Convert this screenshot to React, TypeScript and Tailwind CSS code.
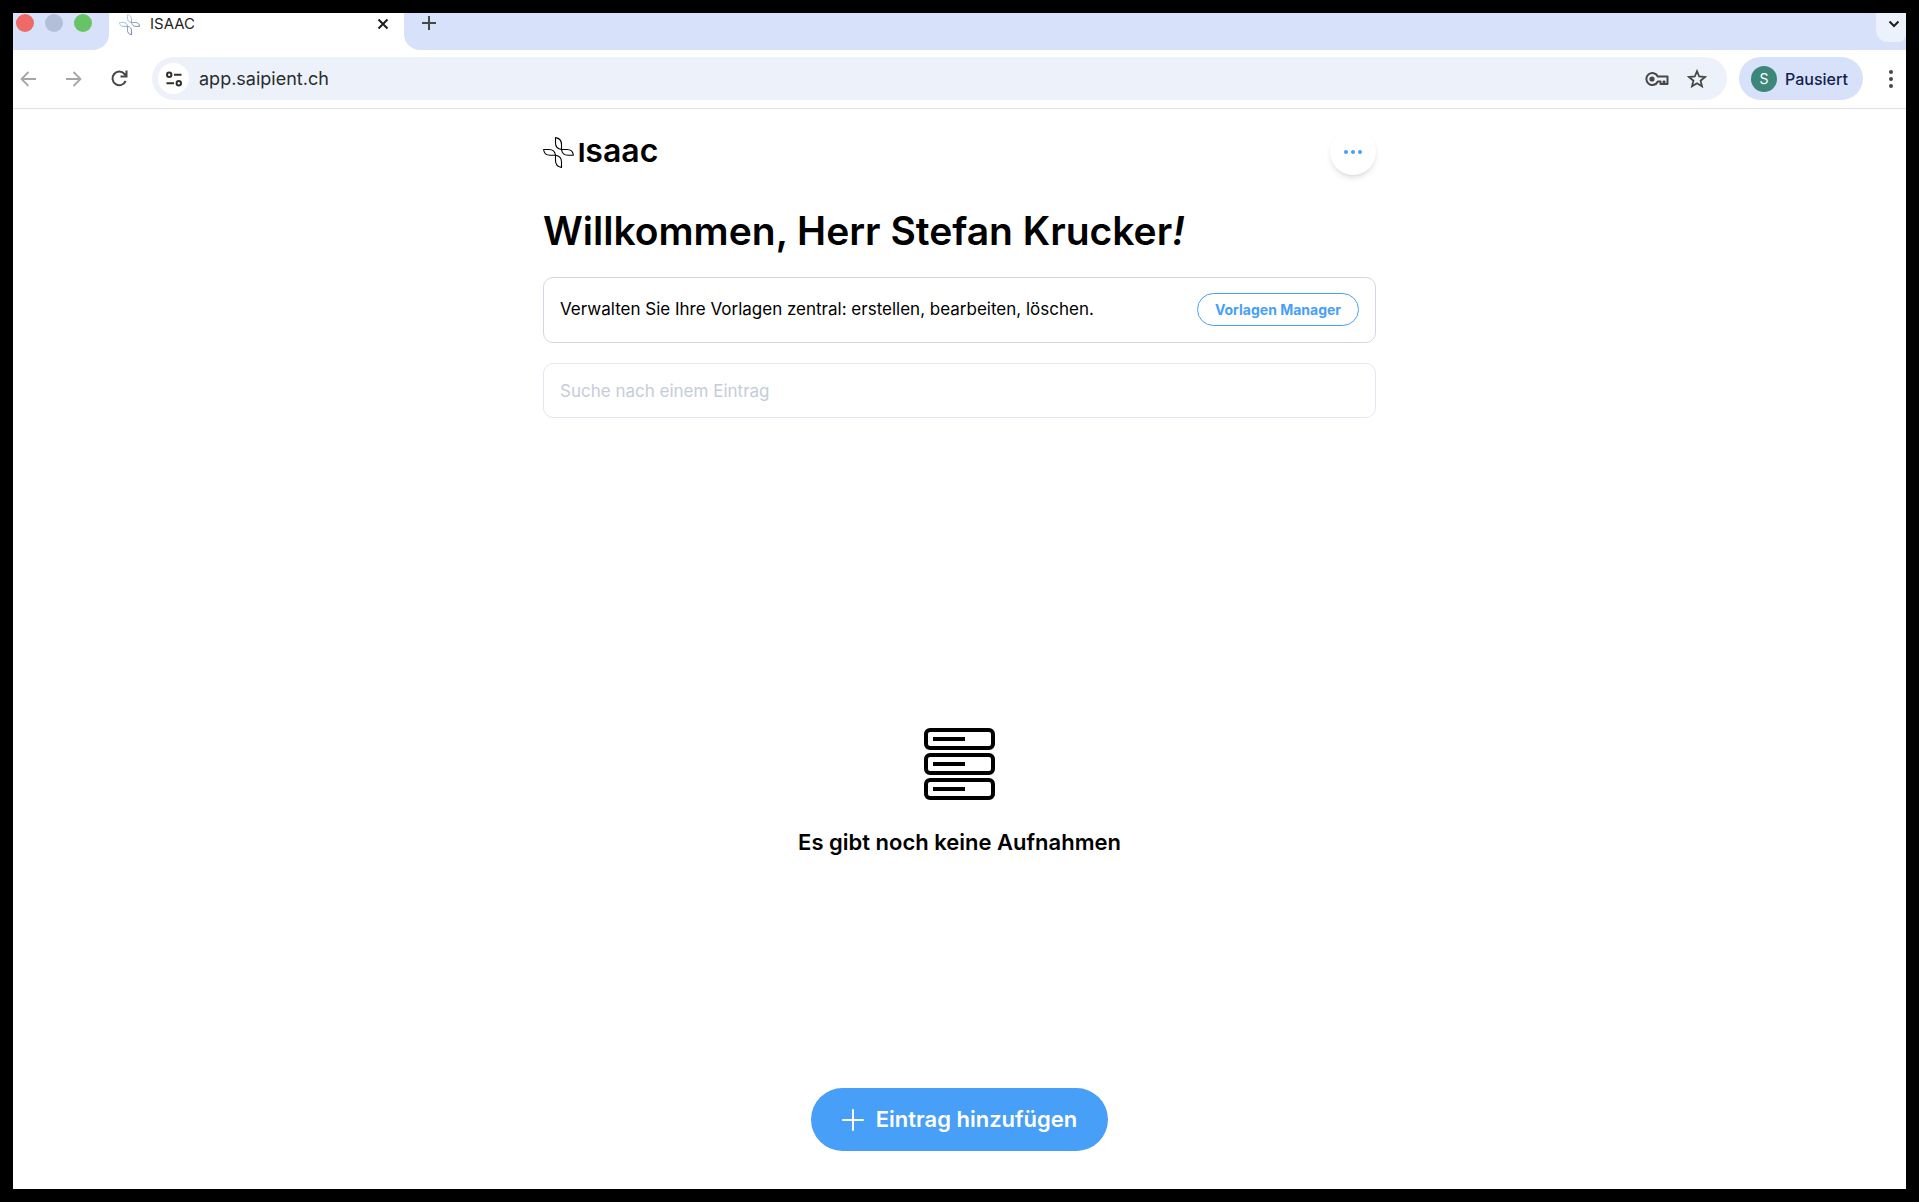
import React from 'react';

const Petals: React.FC<{ className: string; stroke: string }> = ({ className, stroke }) => (
  <svg viewBox="0 0 31 31" className={className} fill="none" stroke={stroke} strokeWidth="1.1" strokeLinejoin="round" aria-hidden="true">
    <defs>
      <linearGradient id="petal" gradientUnits="userSpaceOnUse" x1="4" y1="4" x2="24" y2="30">
        <stop offset="0" stopColor="#9fd8ee" />
        <stop offset="1" stopColor="#39427c" />
      </linearGradient>
    </defs>
    <path d="M12.500 0.600C16.500 1.200 18.500 4 18.500 7.500V12.500C14.500 12 12.500 9.500 12.500 6Z" />
    <path d="M18.500 12.500H24C28 12.500 30 14.500 30.400 18.200H25C21 18.200 19 16.200 18.500 12.500Z" />
    <path d="M0.600 12.500H6C10 12.500 12 14.500 12.500 18.200H7C3 18.200 1 16.200 0.600 12.500Z" />
    <path d="M12.500 18.200C16.500 18.700 18.500 21.200 18.500 25V30.400C14.500 29.800 12.500 27.500 12.500 23.500Z" />
  </svg>
);

const TabStrip: React.FC = () => (
  <div className="flex h-[37px] bg-white">
    <div className="flex w-24 items-start gap-[11px] rounded-br-2xl bg-[#d7e2fa] pt-[1px] pl-[3px]">
      <button aria-label="Schliessen" className="size-[18px] rounded-full bg-[#ed6a66]" />
      <button aria-label="Minimieren" className="size-[18px] rounded-full bg-[#b3bfd8]" />
      <button aria-label="Maximieren" className="size-[18px] rounded-full bg-[#66c466]" />
    </div>
    <div className="flex h-[22px] w-[295px] items-center pr-[11px] pl-[10px]">
      <Petals className="size-[21px]" stroke="url(#petal)" />
      <span className="ml-[10px] flex-1 text-[15px] text-[#1f1f1f]">ISAAC</span>
      <button aria-label="Tab schliessen" className="p-1">
        <svg viewBox="0 0 12 12" className="size-3" stroke="#1f1f1f" strokeWidth="2">
          <path d="M1.500 1.500L10.500 10.500M10.500 1.500L1.500 10.500" />
        </svg>
      </button>
    </div>
    <div className="flex flex-1 items-start justify-between rounded-bl-2xl bg-[#d7e2fa]">
      <button aria-label="Neuer Tab" className="py-[3px] pl-[18px]">
        <svg viewBox="0 0 14 14" className="size-[14px]" stroke="#474747" strokeWidth="2">
          <path d="M7 0V14M0 7H14" />
        </svg>
      </button>
      <button aria-label="Tabs suchen" className="flex h-[29px] w-[30px] justify-center rounded-bl-xl rounded-br-lg bg-[#ecf2fc] pt-[7px] pl-[5px]">
        <svg viewBox="0 0 12 8" className="h-2 w-3" fill="none" stroke="#1f1f1f" strokeWidth="2">
          <path d="M1.500 1.500L6 6L10.500 1.500" />
        </svg>
      </button>
    </div>
  </div>
);

const Toolbar: React.FC = () => (
  <div className="flex h-[59px] items-center border-b border-[#dfe0e2] bg-white pb-px pl-[7px]">
    <button aria-label="Zurück">
      <svg viewBox="0 0 16 16" className="size-4" fill="none" stroke="#a6a6a6" strokeWidth="1.800">
        <path d="M16 8H2M8.500 1L1.500 8L8.500 15" />
      </svg>
    </button>
    <button aria-label="Vorwärts" className="ml-[30px]">
      <svg viewBox="0 0 16 16" className="size-4" fill="none" stroke="#a6a6a6" strokeWidth="1.800">
        <path d="M0 8H14M7.500 1L14.500 8L7.500 15" />
      </svg>
    </button>
    <button aria-label="Neu laden" className="ml-[29px]">
      <svg viewBox="0 0 17 17" className="size-[17px]" fill="none" stroke="#474747" strokeWidth="2">
        <path d="M14.600 11A6.800 6.800 0 1 1 13.500 4L15.500 6M15.500 0.500V6.500H9.500" />
      </svg>
    </button>
    <div className="ml-6 flex h-[43px] flex-1 items-center rounded-full bg-[#edf2fa] pr-5 pl-[6px]">
      <button aria-label="Websiteinformationen" className="flex size-[31px] items-center justify-center rounded-full bg-white">
        <svg viewBox="0 0 16 16" className="size-4" fill="none" stroke="#303030" strokeWidth="2">
          <circle cx="3.200" cy="3.800" r="2.200" />
          <path d="M8 3.800H15.500M0.500 12.200H8" />
          <circle cx="12.800" cy="12.200" r="2.200" />
        </svg>
      </button>
      <input
        aria-label="Adresse"
        defaultValue="app.saipient.ch"
        className="ml-[10px] min-w-0 flex-1 bg-transparent text-[18px] text-[#2a2c2f] outline-none"
      />
      <button aria-label="Passwörter verwalten">
        <svg viewBox="0 0 24 16" className="h-4 w-6" fill="none" stroke="#474747" strokeWidth="2">
          <path d="M12.800 5.500A6 6 0 1 0 12.800 10.500H15.500V13H18.500V10.500H19.500V13H22.500V5.500Z" strokeLinejoin="round" />
          <circle cx="7" cy="8" r="2.600" fill="#474747" stroke="none" />
        </svg>
      </button>
      <button aria-label="Lesezeichen" className="ml-[18px]">
        <svg viewBox="0 0 20 20" className="size-5" fill="none" stroke="#474747" strokeWidth="1.800">
          <path d="M10 2.200L12.200 7.500L18 8L13.600 11.700L15 17.300L10 14.300L5 17.300L6.400 11.700L2 8L7.800 7.500Z" />
        </svg>
      </button>
    </div>
    <button className="ml-3 flex h-[43px] w-[124px] items-center gap-2 rounded-full bg-[#d7e2fa] pl-3 text-[16px] font-medium text-[#14204e]">
      <span className="flex size-[26px] items-center justify-center rounded-full bg-[#3c8779] text-[14px] font-normal text-white">S</span>
      Pausiert
    </button>
    <button aria-label="Menü" className="mr-[13px] ml-[26px] flex flex-col gap-[3px]">
      <span className="size-1 rounded-full bg-[#474747]" />
      <span className="size-1 rounded-full bg-[#474747]" />
      <span className="size-1 rounded-full bg-[#474747]" />
    </button>
  </div>
);

const EmptyState: React.FC = () => (
  <div className="flex flex-1 flex-col items-center justify-center pt-20">
    <svg viewBox="0 0 71 72" className="h-[72px] w-[71px]" fill="none" stroke="#000" strokeWidth="4" aria-hidden="true">
      {[0, 25, 50].map((y) => (
        <g key={y}>
          <rect x="2" y={y + 2} width="67" height="18" rx="4" />
          <path d={`M9 ${y + 11}H41`} />
        </g>
      ))}
    </svg>
    <p className="mt-[26px] text-[22px] leading-8 font-semibold">Es gibt noch keine Aufnahmen</p>
  </div>
);

const App: React.FC = () => {
  return (
    <div className="flex min-h-screen flex-col border-[13px] border-black bg-white font-['Inter','Liberation_Sans',sans-serif] text-black">
      <TabStrip />
      <Toolbar />
      <main className="mx-auto flex w-full max-w-[833px] flex-1 flex-col pt-5 pb-[38px]">
        <header className="flex items-center justify-between">
          <a href="#" aria-label="ISAAC" className="flex items-center gap-1">
            <Petals className="size-[31px]" stroke="#000" />
            <span className="flex items-baseline leading-8">
              <span className="text-[26px] font-bold">I</span>
              <span className="text-[32px] font-semibold">saac</span>
            </span>
          </a>
          <button aria-label="Mehr" className="flex size-[46px] items-center justify-center gap-[3px] rounded-full bg-white shadow-md">
            <span className="size-1 rounded-full bg-[#479ff8]" />
            <span className="size-1 rounded-full bg-[#479ff8]" />
            <span className="size-1 rounded-full bg-[#479ff8]" />
          </button>
        </header>

        <h1 className="mt-8 text-[39px] leading-[48px] font-semibold">
          Willkommen, Herr Stefan Krucker<em>!</em>
        </h1>

        <section className="mt-[22px] flex h-[66px] items-center justify-between rounded-[10px] border border-[#d0d7e3] px-4 pb-px">
          <p className="text-[17px]">Verwalten Sie Ihre Vorlagen zentral: erstellen, bearbeiten, löschen.</p>
          <button className="h-[33px] w-[162px] rounded-full border border-[#479ff8] text-[14px] font-bold text-[#479ff8]">
            Vorlagen Manager
          </button>
        </section>

        <input
          type="search"
          aria-label="Suche nach einem Eintrag"
          placeholder="Suche nach einem Eintrag"
          className="mt-5 h-[55px] rounded-[10px] border border-[#e2e8f0] px-4 text-[17px] outline-none placeholder:text-[#c5ccda]"
        />

        <EmptyState />

        <button className="flex h-[63px] w-[297px] items-center justify-center gap-3 self-center rounded-full bg-[#479ff8] text-[22px] font-semibold text-white">
          <svg viewBox="0 0 22 22" className="size-[22px]" stroke="currentColor" strokeWidth="2" strokeLinecap="round" aria-hidden="true">
            <path d="M11 1V21M1 11H21" />
          </svg>
          Eintrag hinzufügen
        </button>
      </main>
    </div>
  );
};

export default App;
